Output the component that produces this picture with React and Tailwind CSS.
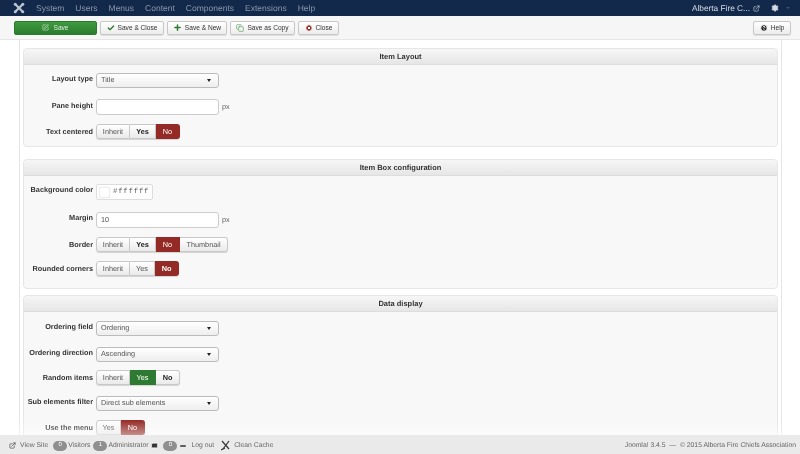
import { Check, Plus, Copy, XCircle, SquarePen, HelpCircle, Settings, ExternalLink, Mail, Minus } from "lucide-react";

const menuItems = ["System", "Users", "Menus", "Content", "Components", "Extensions", "Help"];

function JoomlaLogo() {
  return (
    <svg width="12" height="12" viewBox="0 0 24 24" fill="none" stroke="#b9c2cf" strokeWidth="4.5" strokeLinecap="round">
      <path d="M6 6 L18 18" />
      <path d="M18 6 L6 18" />
      <circle cx="4.5" cy="4.5" r="3" fill="#b9c2cf" stroke="none" />
      <circle cx="19.5" cy="4.5" r="3" fill="#b9c2cf" stroke="none" />
      <circle cx="4.5" cy="19.5" r="3" fill="#b9c2cf" stroke="none" />
      <circle cx="19.5" cy="19.5" r="3" fill="#b9c2cf" stroke="none" />
    </svg>
  );
}

function CleanIcon() {
  return (
    <svg width="10" height="11" viewBox="0 0 10 11" fill="none" stroke="#333" strokeWidth="1.2">
      <path d="M1 1 L8 9" />
      <path d="M8 1 L2 9" />
      <path d="M0 10 L4 8" />
    </svg>
  );
}

function ToolbarButton({ icon, label, className }) {
  return (
    <button className={`h-[14px] flex items-center justify-center gap-[3px] rounded-[2px] border border-[#c8c8c8] bg-gradient-to-b from-white to-[#ececec] text-[6.6px] text-[#333] whitespace-nowrap shadow-[0_1px_1px_rgba(0,0,0,0.1)] ${className}`}>
      {icon}
      <span className="pt-[1px]">{label}</span>
    </button>
  );
}

function Row({ label, flat, className = "mb-[11px]", children }) {
  return (
    <div className={`flex items-center gap-[3px] ${className}`}>
      <label className={`w-[69px] shrink-0 text-right text-[7.3px] leading-[12px] font-bold text-[#333] whitespace-nowrap ${flat ? "" : "-mt-[3px]"}`}>{label}</label>
      {children}
    </div>
  );
}

function Select({ value }) {
  return (
    <div className="w-[123px] h-[15px] flex items-center justify-between px-[4px] rounded-[3px] border border-[#bbb] bg-gradient-to-b from-white to-[#eee] text-[7.3px] text-[#555]">
      {value}
      <span className="mr-[3px] w-0 h-0 border-x-[2.5px] border-x-transparent border-t-[3px] border-t-[#222]" />
    </div>
  );
}

function TextInput({ value }) {
  return (
    <div className="flex items-center gap-[3px]">
      <div className="w-[123px] h-[16px] flex items-center px-[4px] rounded-[3px] border border-[#ccc] bg-white text-[7.3px] text-[#555]">{value}</div>
      <span className="text-[7.3px] text-[#666]">px</span>
    </div>
  );
}

function Toggle({ options, active, color = "red" }) {
  return (
    <div className="flex h-[15px] rounded-[3px] shadow-[0_1px_1px_rgba(0,0,0,0.15)]">
      {options.map(([name, width, bold]) => {
        const on = name === active;
        const bg = color === "green" ? "bg-[#2f7a32] text-white" : "bg-[#942a25] text-white";
        return (
          <div
            key={name}
            style={{ width }}
            className={`flex items-center justify-center pt-[1px] border border-l-0 first:border-l first:rounded-l-[3px] last:rounded-r-[3px] text-[7.3px] ${on ? `${bg} border-transparent` : `border-[#c8c8c8] bg-gradient-to-b from-white to-[#eaeaea] ${bold ? "text-[#222]" : "text-[#555]"}`} ${bold ? "font-bold" : ""}`}
          >
            {name}
          </div>
        );
      })}
    </div>
  );
}

function Panel({ title, className = "", children }) {
  return (
    <section className={`rounded-[4px] border border-[#e6e6e6] bg-[#f8f8f8] ${className}`}>
      <h3 className="h-[16px] flex items-center justify-center pt-[1px] rounded-t-[4px] border-b border-[#ddd] bg-gradient-to-b from-[#f6f6f6] to-[#e6e6e6] text-[7.5px] font-bold text-[#333]">
        {title}
      </h3>
      {children}
    </section>
  );
}

function Badge({ n }) {
  return <span className="w-[14px] h-[10px] flex items-center justify-center rounded-full bg-[#8f8f8f] text-[6px] text-white">{n}</span>;
}

export default function App() {
  return (
    <div className="relative w-[800px] h-[454px] flex flex-col overflow-hidden bg-white font-['Liberation_Sans',sans-serif] [text-rendering:geometricPrecision] blur-[0.35px]">
      {/* Top nav */}
      <nav className="h-[16px] shrink-0 flex items-center justify-between pl-[13px] pr-[10px] bg-[#13294b] text-[8.5px] text-[#8a97aa]">
        <div className="flex items-center">
          <JoomlaLogo />
          <ul className="flex gap-[11px] ml-[11px]">
            {menuItems.map((m) => <li key={m}>{m}</li>)}
          </ul>
        </div>
        <div className="flex items-center text-[#d8dde5]">
          <span className="text-[8.3px]">Alberta Fire C...</span>
          <ExternalLink className="ml-[3px] w-[7px] h-[7px]" />
          <Settings className="ml-[11px] w-[8px] h-[8px] fill-[#d8dde5]" />
          <span className="ml-[7px] w-0 h-0 border-x-[2px] border-x-transparent border-t-[2px] border-t-[#45526a]" />
        </div>
      </nav>

      {/* Toolbar */}
      <div className="h-[24px] shrink-0 flex items-center justify-between pl-[14px] pr-[9px] border-b border-[#e5e5e5] bg-[#f6f6f6]">
        <div className="flex items-center gap-[3px]">
          <button className="w-[83px] h-[14px] flex items-center justify-center gap-[4px] rounded-[2px] border border-[#2a7a2e] bg-gradient-to-b from-[#3f9b3f] to-[#2b7c2e] text-[6.6px] text-[#dcecdc]">
            <SquarePen className="w-[7px] h-[7px]" />
            <span className="pt-[1px]">Save</span>
          </button>
          <ToolbarButton className="w-[64px]" label="Save & Close" icon={<Check className="w-[8px] h-[8px] text-[#2f7a32]" strokeWidth={4} />} />
          <ToolbarButton className="w-[60px]" label="Save & New" icon={<Plus className="w-[9px] h-[9px] text-[#2f7a32]" strokeWidth={4} />} />
          <ToolbarButton className="w-[65px]" label="Save as Copy" icon={<Copy className="w-[8px] h-[8px] text-[#5a9a5a]" />} />
          <ToolbarButton className="w-[41px]" label="Close" icon={<XCircle className="w-[8px] h-[8px] text-white fill-[#942a25]" strokeWidth={3} />} />
        </div>
        <ToolbarButton className="w-[38px]" label="Help" icon={<HelpCircle className="w-[8px] h-[8px] text-white fill-[#222]" strokeWidth={3} />} />
      </div>

      {/* Content */}
      <main className="flex-1 min-h-0 overflow-hidden ml-[19px] mr-[18px] border-x border-[#e5e5e5] px-[3px] pt-[8px]">
        <Panel title="Item Layout" className="h-[99px] mb-[12px]">
          <div className="pt-[8px]">
            <Row label="Layout type"><Select value="Title" /></Row>
            <Row label="Pane height" className="mb-[9px]"><TextInput /></Row>
            <Row label="Text centered" flat className="">
              <Toggle active="No" options={[["Inherit", 34], ["Yes", 26, true], ["No", 24]]} />
            </Row>
          </div>
        </Panel>

        <Panel title="Item Box configuration" className="h-[130px] mb-[6px]">
          <div className="pt-[8px]">
            <Row label={<span className="block -mt-[1px]">Background color</span>} className="mb-[12px]">
              <div className="w-[57px] h-[16px] flex items-center gap-[3px] px-[2px] rounded-[2px] border border-[#ddd] bg-white">
                <span className="w-[11px] h-[11px] rounded-[2px] border border-[#eee] bg-white shadow-[0_0_1px_rgba(0,0,0,0.2)]" />
                <span className="text-[7.3px] tracking-[0.8px] text-[#555] font-['Liberation_Mono',monospace]">#ffffff</span>
              </div>
            </Row>
            <Row label={<span className="block -mt-[1px]">Margin</span>} className="mb-[9px]"><TextInput value="10" /></Row>
            <Row label="Border" flat className="mb-[9px]">
              <Toggle active="No" options={[["Inherit", 34], ["Yes", 26, true], ["No", 24], ["Thumbnail", 48]]} />
            </Row>
            <Row label="Rounded corners" flat className="">
              <Toggle active="No" options={[["Inherit", 34], ["Yes", 25], ["No", 24, true]]} />
            </Row>
          </div>
        </Panel>

        <Panel title="Data display">
          <div className="pt-[9px]">
            <Row label="Ordering field"><Select value="Ordering" /></Row>
            <Row label="Ordering direction" className="mb-[8px]"><Select value="Ascending" /></Row>
            <Row label="Random items" flat>
              <Toggle active="Yes" color="green" options={[["Inherit", 34], ["Yes", 26], ["No", 24, true]]} />
            </Row>
            <Row label="Sub elements filter" className="mb-[9px]"><Select value="Direct sub elements" /></Row>
            <Row label={<span className="block pt-[2px] leading-[11px]">Use the menu<br />name as title</span>} flat className="!items-start">
              <Toggle active="No" options={[["Yes", 25], ["No", 24]]} />
            </Row>
          </div>
        </Panel>
      </main>

      {/* Fade over the content just above the status bar */}
      <div className="absolute left-0 right-0 bottom-[18px] h-[16px] bg-gradient-to-b from-white/0 to-white/50" />

      {/* Status bar */}
      <footer className="relative h-[19px] shrink-0 flex items-center justify-between pt-[2px] pl-[9px] pr-[4px] bg-[#eaeaea] text-[6.8px] text-[#666]">
        <div className="flex items-center">
          <ExternalLink className="w-[7px] h-[7px] text-[#333]" />
          <span className="ml-[4px] pt-[1px]">View Site</span>
          <span className="ml-[5px]"><Badge n="0" /></span>
          <span className="ml-[1px] pt-[1px]">Visitors</span>
          <span className="ml-[3px]"><Badge n="1" /></span>
          <span className="ml-[1px] pt-[1px]">Administrator</span>
          <Mail className="ml-[3px] w-[7px] h-[7px] text-white fill-[#333]" />
          <span className="ml-[5px]"><Badge n="0" /></span>
          <Minus className="ml-[2px] w-[8px] h-[8px] text-[#333]" strokeWidth={4} />
          <span className="ml-[4px] pt-[1px]">Log out</span>
          <span className="ml-[7px]"><CleanIcon /></span>
          <span className="ml-[3px] pt-[1px]">Clean Cache</span>
        </div>
        <span className="pt-[1px]">Joomla! 3.4.5 &nbsp;—&nbsp; © 2015 Alberta Fire Chiefs Association</span>
      </footer>
    </div>
  );
}
